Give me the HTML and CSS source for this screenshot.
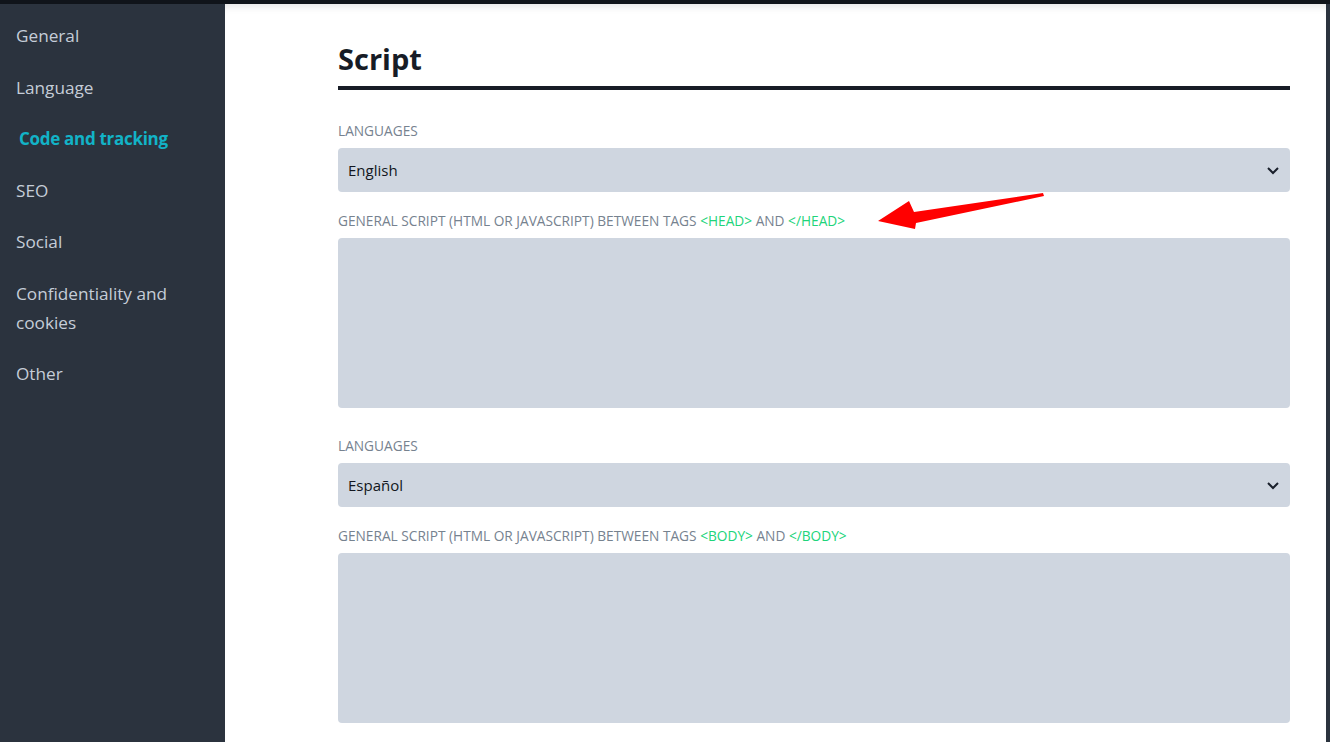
FILE: index.html
```html
<!doctype html>
<html lang="en">
<head>
    <meta charset="UTF-8">
    <title>Code and tracking</title>
    <link rel="stylesheet" href="styles.css">
</head>
<body>
<div class="topbar"></div>
<div class="layout">
    <ul class="sidebar">
        <li>General</li>
        <li>Language</li>
        <li class="active">Code and tracking</li>
        <li>SEO</li>
        <li>Social</li>
        <li>Confidentiality and cookies</li>
        <li>Other</li>
    </ul>
    <div class="main">
        <h1 class="title">Script</h1>

        <div class="field">
            <label>Languages</label>
            <div class="select">
                <span>English</span>
                <svg class="chevron" width="14" height="14" viewBox="0 0 14 14"><path d="M2 5l5 5 5-5" fill="none" stroke="#1a202c" stroke-width="2"/></svg>
            </div>
        </div>
        <div class="field big">
            <label>General script (HTML or JavaScript) between tags <em>&lt;head&gt;</em> and <em>&lt;/head&gt;</em></label>
            <div class="textarea"></div>
        </div>

        <div class="field">
            <label>Languages</label>
            <div class="select">
                <span>Español</span>
                <svg class="chevron" width="14" height="14" viewBox="0 0 14 14"><path d="M2 5l5 5 5-5" fill="none" stroke="#1a202c" stroke-width="2"/></svg>
            </div>
        </div>
        <div class="field big">
            <label>General script (HTML or JavaScript) between tags <em>&lt;body&gt;</em> and <em>&lt;/body&gt;</em></label>
            <div class="textarea"></div>
        </div>
    </div>
    <div class="edge"></div>
</div>
<svg class="arrow" width="1330" height="742" viewBox="0 0 1330 742">
    <polygon points="878,221 909,201 914,212 1043,193 1044,196 916,223 915,229" fill="#ff0000"/>
</svg>
</body>
</html>
```

FILE: styles.css
```css
*{
    margin: 0;
    padding: 0;
    box-sizing: border-box;
}
html, body{
    height: 100%;
    overflow: hidden;
}
body{
    font-family: "Open Sans", "Noto Sans", sans-serif;
    background-color: #ffffff;
    position: relative;
    display: flex;
    flex-direction: column;
}
.topbar{
    height: 4px;
    background-color: #10141a;
    flex-shrink: 0;
}
.layout{
    flex: 1;
    display: flex;
}
.sidebar{
    width: 225px;
    flex-shrink: 0;
    background-color: #2b333e;
    padding-top: 6px;
}
.sidebar li{
    list-style-type: none;
    color: #c5cdd8;
    font-size: 17.2px;
    line-height: 29px;
    padding: 11.25px 40px 11.25px 16px;
}
.sidebar .active{
    color: #12b3c7;
    font-weight: 700;
    padding-left: 19px;
    letter-spacing: -0.3px;
    font-size: 17px;
}
.main{
    flex: 1;
    padding: 37px 36px 0 113px;
    box-shadow: inset 0 8px 8px -6px rgba(0,0,0,0.12);
}
.edge{
    width: 4px;
    background-color: #2b333e;
}
.title{
    font-size: 29px;
    line-height: 36px;
    font-weight: 700;
    color: #171c26;
    padding-bottom: 9px;
    border-bottom: 4px solid #171c26;
    margin-bottom: 32px;
}
.field{
    margin-bottom: 20px;
}
.field.big{
    margin-bottom: 29px;
}
.field label{
    display: block;
    font-size: 13.7px;
    line-height: 18px;
    text-transform: uppercase;
    color: #76828f;
    margin-bottom: 8px;
}
.field label em{
    font-style: normal;
    color: #20d47a;
}
.select{
    height: 44px;
    background-color: #cfd6e0;
    border-radius: 4px;
    display: flex;
    align-items: center;
    justify-content: space-between;
    padding: 0 10px;
    font-size: 15px;
    color: #121620;
}
.textarea{
    height: 170px;
    background-color: #cfd6e0;
    border-radius: 4px;
}
.arrow{
    position: absolute;
    left: 0;
    top: 0;
    pointer-events: none;
}
```
